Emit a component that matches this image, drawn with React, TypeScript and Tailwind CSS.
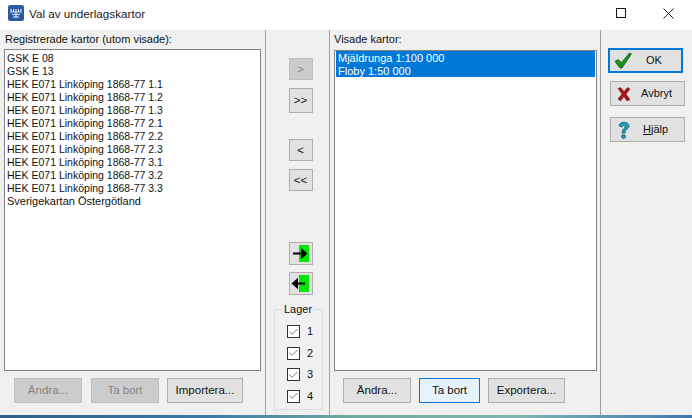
import { Check } from 'lucide-react';

const left = [
    'GSK E 08',
    'GSK E 13',
    'HEK E071 Linköping 1868-77 1.1',
    'HEK E071 Linköping 1868-77 1.2',
    'HEK E071 Linköping 1868-77 1.3',
    'HEK E071 Linköping 1868-77 2.1',
    'HEK E071 Linköping 1868-77 2.2',
    'HEK E071 Linköping 1868-77 2.3',
    'HEK E071 Linköping 1868-77 3.1',
    'HEK E071 Linköping 1868-77 3.2',
    'HEK E071 Linköping 1868-77 3.3',
];

function Btn({ label, disabled, focus, cls }: { label: string; disabled?: boolean; focus?: boolean; cls: string }) {
    const look = disabled
        ? 'bg-[#cccccc] border-[#bfbfbf] text-[#838383]'
        : focus
            ? 'bg-[#e5f1fb] border-[#0078d7] text-[#111]'
            : 'bg-[#e1e1e1] border-[#adadad] text-[#111]';
    return <div className={`flex items-center justify-center border text-[11.5px] ${look} ${cls}`}>{label}</div>;
}

function ArrowBtn({ dir }: { dir: 'right' | 'left' }) {
    return (
        <div className="w-[24px] h-[23px] border border-[#b5a9b0] bg-[#e1e1e1] flex items-center justify-center">
            <svg width="22" height="21" viewBox="0 0 22 21">
                <rect x="9" y="2" width="10" height="17" fill="#00e600" />
                {dir === 'right' ? (
                    <path d="M3 10.5h9M12 7l4 3.5-4 3.5z" stroke="#000" strokeWidth="2" fill="#000" />
                ) : (
                    <path d="M7 10.5h8M7 7l-4 3.5 4 3.5z" stroke="#000" strokeWidth="2" fill="#000" />
                )}
            </svg>
        </div>
    );
}

function Lager({ n }: { n: number }) {
    return (
        <div className="flex items-center h-[21.5px] pl-[12px] gap-[7px]">
            <div className="w-[13px] h-[13px] border border-[#333] bg-white flex items-center justify-center">
                <Check className="w-[12px] h-[12px] text-[#555]" strokeWidth={1.75} />
            </div>
            <span>{n}</span>
        </div>
    );
}

function SideBtn({ icon, label, cls, labelCls }: { icon: React.ReactNode; label: React.ReactNode; cls: string; labelCls: string }) {
    return (
        <div className={`flex items-center ${cls}`}>
            <div className="w-[26px] flex justify-center shrink-0">{icon}</div>
            <span className={labelCls}>{label}</span>
        </div>
    );
}

export default function App() {
    return (
        <div
            className="w-[692px] h-[418px] overflow-hidden flex flex-col bg-[#f0f0f0] text-[11px] leading-[13px] text-[#111]"
            style={{ fontFamily: '"Liberation Sans", Arial, sans-serif' }}
        >
            {/* Title bar */}
            <div className="h-[30px] bg-white flex items-center shrink-0 pl-[8px] pb-[4px]">
                <svg width="16" height="16" viewBox="0 0 16 16" className="shrink-0">
                    <rect width="16" height="16" rx="2" fill="#2f5aa5" />
                    <path d="M3 4v3h10V4M5.5 4v3M8 4v3M10.5 4v3M8 7v6M5 12h6M4 9.5h8" stroke="#dfe8f7" strokeWidth="1.1" fill="none" />
                </svg>
                <span className="ml-[5px] text-[11.7px] text-[#1a1a1a]">Val av underlagskartor</span>
                <div className="ml-auto flex items-center">
                    <div className="w-[10px] h-[10px] border border-[#111] mr-[37px]" />
                    <svg width="11" height="11" viewBox="0 0 11 11" className="mr-[18px]">
                        <path d="M0.5 0.5l10 10M10.5 0.5l-10 10" stroke="#222" strokeWidth="1" />
                    </svg>
                </div>
            </div>

            {/* Body */}
            <div className="flex flex-1 min-h-0">
                {/* Left column */}
                <div className="w-[266px] border-r border-[#a0a0a0] flex flex-col pl-[4px] pr-[4px]">
                    <div className="h-[19px] flex items-center pl-[1px]">Registrerade kartor (utom visade):</div>
                    <div className="h-[322px] border border-[#828282] bg-white pl-[2px] pt-[2px]">
                        {left.map((t) => (
                            <div key={t} className="h-[13px] whitespace-nowrap text-[10.5px]">{t}</div>
                        ))}
                        <div className="h-[13px] whitespace-nowrap">Sverigekartan Östergötland</div>
                    </div>
                    <div className="flex pt-[7px] pl-[10px] gap-[9px]">
                        <Btn label="Ändra..." disabled cls="w-[68px] h-[25px]" />
                        <Btn label="Ta bort" disabled cls="w-[68px] h-[25px]" />
                        <Btn label="Importera..." cls="w-[76px] h-[25px] -ml-[1px]" />
                    </div>
                </div>

                {/* Centre column */}
                <div className="w-[64px] border-r border-[#a0a0a0] flex flex-col items-center">
                    <div className="pt-[28px] pl-[6px] flex flex-col items-center gap-[8px]">
                        <Btn label=">" disabled cls="w-[24px] h-[22px]" />
                        <Btn label=">>" cls="w-[24px] h-[25px]" />
                    </div>
                    <div className="pt-[26px] pl-[6px] flex flex-col items-center gap-[8px]">
                        <Btn label="<" cls="w-[24px] h-[22px]" />
                        <Btn label="<<" cls="w-[24px] h-[22px]" />
                    </div>
                    <div className="pt-[51px] pl-[6px] flex flex-col items-center gap-[7px]">
                        <ArrowBtn dir="right" />
                        <ArrowBtn dir="left" />
                    </div>
                    <div className="relative w-[49px] h-[101px] mt-[14px] ml-[2px] border border-[#dcdcdc] pt-[11px]">
                        <span className="absolute -top-[7px] left-[7px] px-[2px] bg-[#f0f0f0]">Lager</span>
                        {[1, 2, 3, 4].map((n) => <Lager key={n} n={n} />)}
                    </div>
                </div>

                {/* Right column */}
                <div className="w-[271px] border-r border-[#a0a0a0] flex flex-col pl-[4px] pr-[3px]">
                    <div className="h-[20px] flex items-center pb-[2px]">Visade kartor:</div>
                    <div className="h-[321px] border border-[#828282] bg-white px-[1px]">
                        <div className="bg-[#0078d7] text-white pl-[2px] pt-[1px] h-[26px]">
                            <div className="h-[13px]">Mjäldrunga 1:100 000</div>
                            <div className="h-[12px]">Floby 1:50 000</div>
                        </div>
                    </div>
                    <div className="flex pt-[7px] pl-[9px] gap-[8px]">
                        <Btn label="Ändra..." cls="w-[68px] h-[25px]" />
                        <Btn label="Ta bort" focus cls="w-[61px] h-[25px]" />
                        <Btn label="Exportera..." cls="w-[77px] h-[25px]" />
                    </div>
                </div>

                {/* Action buttons */}
                <div className="flex-1 flex flex-col pl-[7px] pt-[18px]">
                    <SideBtn
                        cls="w-[75px] h-[25px] border-2 border-[#0078d7] bg-[#e1e1e1]"
                        labelCls="ml-[10px]"
                        label="OK"
                        icon={
                            <svg width="19" height="17" viewBox="0 0 19 17">
                                <path d="M1 9.5l3-2 3.5 3L15.5 1l2 .8L8 16H6z" fill="#1f8f1f" stroke="#0d5c10" strokeWidth="0.8" />
                            </svg>
                        }
                    />
                    <SideBtn
                        cls="w-[75px] h-[25px] border border-[#adadad] bg-[#e1e1e1] mt-[8px] ml-[2px]"
                        labelCls="ml-[4px]"
                        label="Avbryt"
                        icon={
                            <svg width="16" height="16" viewBox="0 0 16 16">
                                <path d="M2 2.5l2.5-1L8 5.5l3.5-4 2.5 1.5L10 8l4 5.5-3 1.5L8 10.5 4.5 15 2 13l4-5z" fill="#a01818" stroke="#6f1010" strokeWidth="0.5" />
                            </svg>
                        }
                    />
                    <SideBtn
                        cls="w-[75px] h-[25px] border border-[#adadad] bg-[#e1e1e1] mt-[11px] ml-[2px]"
                        labelCls="ml-[6px]"
                        label={<><span className="underline">H</span>jälp</>}
                        icon={
                            <svg width="14" height="18" viewBox="0 0 14 18">
                                <path d="M2 5c0-5 10-5 10 0 0 3-4 3-4 7H5c0-4 3-4 3-7 0-1-2-1-3 1z" fill="#1f9fb5" stroke="#0d5566" strokeWidth="0.7" />
                                <circle cx="6.5" cy="15.5" r="2" fill="#1f9fb5" stroke="#0d5566" strokeWidth="0.7" />
                            </svg>
                        }
                    />
                </div>
            </div>

            {/* Window behind */}
            <div className="h-[3px] shrink-0 bg-[linear-gradient(90deg,#2f5f86_0%,#3a7aa5_30%,#6fa8a0_50%,#7fb5b0_75%,#3f78b0_100%)]" />
        </div>
    );
}
